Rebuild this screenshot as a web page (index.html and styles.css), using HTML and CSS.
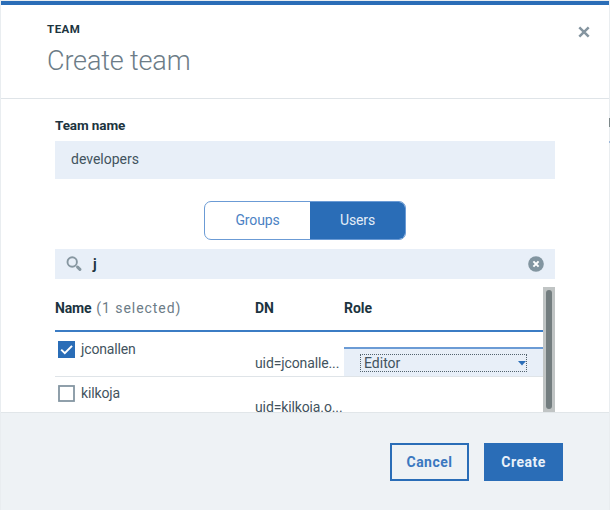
FILE: index.html
```html
<!DOCTYPE html>
<html lang="en">
<head>
<meta charset="utf-8">
<title>Create team</title>
<link rel="stylesheet" href="styles.css">
</head>
<body>
<main class="modal">
  <header class="header">
    <div>
      <p class="label">TEAM</p>
      <h1 class="title">Create team</h1>
    </div>
    <svg class="close" viewBox="0 0 12 12"><path d="M1.3 1.3 10.7 10.7M10.7 1.3 1.3 10.7"/></svg>
  </header>
  <section class="content">
    <div class="field-label">Team name</div>
    <div class="input">developers</div>
    <div class="switcher">
      <div class="switch">Groups</div>
      <div class="switch selected">Users</div>
    </div>
    <div class="search">
      <svg class="magnifier" viewBox="0 0 16 16"><circle cx="6.2" cy="6" r="4.7"/><path d="M11.6 11.1 13.9 13.4"/></svg>
      <span class="query">j</span>
      <svg class="clear" viewBox="0 0 16 16"><circle cx="8" cy="8" r="7.8"/><path d="M5.4 5.4 10.6 10.6M10.6 5.4 5.4 10.6"/></svg>
    </div>
    <div class="list">
      <div class="table">
        <div class="row head">
          <div><b class="name">Name</b><span class="count">(1 selected)</span></div>
          <b>DN</b>
          <b>Role</b>
        </div>
        <div class="row">
          <div class="user">
            <svg class="check" viewBox="0 0 17 17"><rect width="17" height="17" fill="#2a6db7"/><path d="M3.2 8.6 6.8 12.2 14 4.9" fill="none" stroke="#fff" stroke-width="2"/></svg>
            <span class="username">jconallen</span>
          </div>
          <div class="dn">uid=jconalle...</div>
          <div class="role">
            <div class="select">Editor<svg class="caret" viewBox="0 0 8 5"><path d="M0 0H8L4 4.6Z"/></svg></div>
          </div>
        </div>
        <div class="row">
          <div class="user">
            <svg class="check" viewBox="0 0 17 17"><rect x="1" y="1" width="15" height="15" fill="#fff" stroke="#8496a2" stroke-width="1.8"/></svg>
            <span class="username">kilkoja</span>
          </div>
          <div class="dn">uid=kilkoja.o...</div>
        </div>
      </div>
      <div class="scrollbar"><div class="thumb"></div></div>
    </div>
  </section>
  <footer class="footer">
    <div class="button secondary">Cancel</div>
    <div class="button primary">Create</div>
  </footer>
</main>
</body>
</html>
```
FILE: styles.css
```css
* { box-sizing: border-box; }
body {
  margin: 0;
  height: 510px;
  overflow: hidden;
  background: linear-gradient(#e9edf0 118px, #7d888a 118px, #7d888a 127px, #e9edf0 127px, #e9edf0 141px, #9db8da 141px, #9db8da 143px, #e9edf0 143px) right / 1px 100% no-repeat #e9edf0;
  padding: 1px 1px 0;
  font-family: Roboto, "Liberation Sans", sans-serif;
  font-size: 14px;
  line-height: 18px;
  color: #42535e;
}
.modal {
  height: 509px;
  display: flex;
  flex-direction: column;
  background: #fff;
  border-top: 4px solid #2a6db7;
}
.header {
  height: 94px;
  flex: none;
  display: flex;
  justify-content: space-between;
  padding: 16px 19px 0 46px;
  border-bottom: 1px solid #dfe4e8;
}
.label { margin: 0; font-size: 11.5px; font-weight: 700; color: #1c3440; line-height: 17px; letter-spacing: .5px; }
.title { margin: 6px 0 0; font-size: 27px; line-height: 34px; font-weight: 300; color: #6c7c87; letter-spacing: -.15px; }
.close { width: 12px; height: 12px; margin-top: 5px; fill: none; stroke: #8595a0; stroke-width: 2.5; }
.content { height: 313px; flex: none; padding: 17px 54px 0; overflow: hidden; }
.field-label { height: 25px; font-size: 13.5px; font-weight: 700; color: #1c3440; letter-spacing: -.1px; }
.input { height: 38px; background: #e8eff8; display: flex; align-items: center; padding: 0 16px 2px; }
.switcher {
  width: 202px;
  height: 39px;
  margin: 22px auto 9px 149px;
  display: flex;
  border: 1px solid #6b9bd5;
  border-radius: 7px;
  overflow: hidden;
}
.switch { width: 105px; display: flex; align-items: center; justify-content: center; color: #4b82c4; padding: 0 0 2px; letter-spacing: -.15px; }
.selected { background: #2a6db7; color: #e3edf8; flex: 1; }
.search { height: 30px; background: #e8eff8; display: flex; align-items: center; padding: 0 11px; }
.magnifier { width: 16px; height: 16px; fill: none; stroke: #8797a1; stroke-width: 1.9; }
.magnifier path { stroke-width: 3; stroke-linecap: round; }
.query { margin-left: 11px; flex: 1; color: #1c3440; font-weight: 700; }
.clear { width: 16px; height: 16px; fill: #8295a0; margin-top: -1px; }
.clear path { stroke: #fff; stroke-width: 2; }
.list { display: flex; height: 125px; margin-top: 8px; overflow: hidden; }
.table { width: 488px; height: 134px; }
.row { display: grid; grid-template-columns: 200px 89px 199px; height: 45px; border-bottom: 1px solid #dfe4e8; }
.head { padding-top: 12px; border-bottom: 2px solid #3b7cc4; color: #1c3440; }
.name { letter-spacing: -.2px; }
.count { color: #6c7c87; margin-left: 5px; letter-spacing: .95px; }
.user { display: flex; padding: 8px 0 0 3px; align-items: flex-start; }
.check { width: 17px; height: 17px; margin: 1px 6px 0 0; }
.username { letter-spacing: -.15px; }
.dn { padding-top: 22px; white-space: nowrap; letter-spacing: -.12px; }
.row:last-child .user { padding-top: 7px; }
.row:last-child .dn { padding-top: 21px; }
.role { margin-top: 15px; border-top: 2px solid #6b9bd5; background: #e8eff8; padding: 5px 0 0 16px; }
.select { width: 167px; height: 18px; border: 1px dotted #53636e; display: flex; align-items: center; justify-content: space-between; padding-left: 3px; }
.caret { width: 8px; height: 5px; fill: #2a6db7; margin-top: 1px; }
.scrollbar { width: 12px; background: #c0c4c4; padding: 3px; }
.thumb { height: 119px; border-radius: 3px; background: #737d7f; }
.footer { flex: 1; background: #eef2f5; border-top: 1px solid #e1e6e9; display: flex; justify-content: flex-end; gap: 15px; padding: 30px 46px 0; }
.button { width: 79px; height: 38px; display: flex; align-items: center; justify-content: center; border: 2px solid #2a6db7; font-weight: 700; letter-spacing: .5px; }
.secondary { color: #3b78c0; }
.primary { background: #2a6db7; color: #e9f1fa; }
```
